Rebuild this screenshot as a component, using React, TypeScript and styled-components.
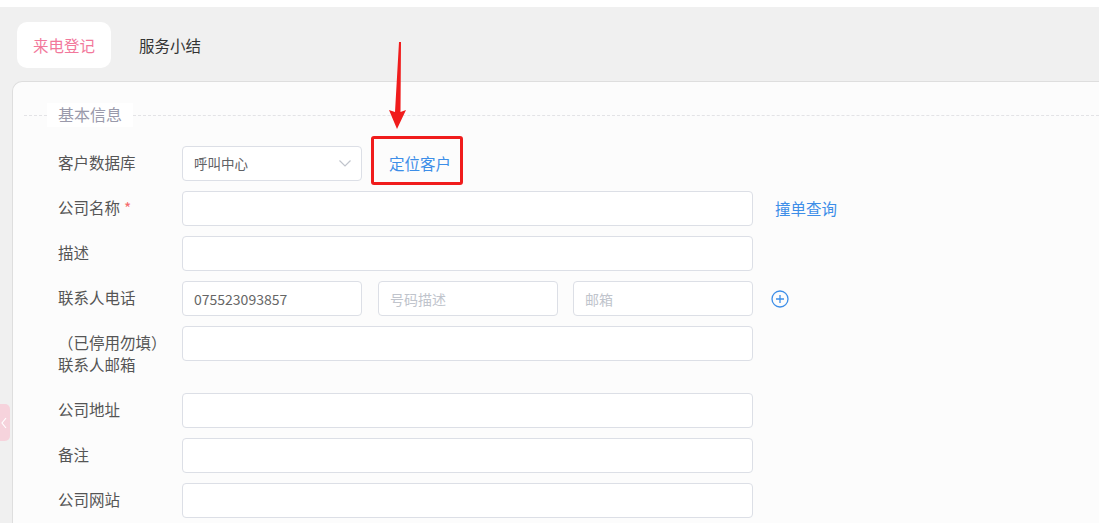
import styled, { createGlobalStyle } from 'styled-components';

const GlobalStyle = createGlobalStyle`
  html, body {
    margin: 0;
    padding: 0;
    background: #ffffff;
    overflow: hidden;
  }
  body {
    font-family: "Noto Sans CJK SC", "Noto Sans", "Liberation Sans", sans-serif;
  }
  * {
    box-sizing: border-box;
  }
`;

const Page = styled.div`
  position: relative;
  width: 1099px;
  height: 523px;
  padding-top: 7px;
  overflow: hidden;
`;

const Main = styled.div`
  background: #f0f0f0;
  height: 516px;
  display: flex;
  flex-direction: column;
`;

const TabBar = styled.div`
  display: flex;
  gap: 12px;
  padding: 15px 0 0 17px;
`;

const Tab = styled.div<{ active?: boolean }>`
  height: 46px;
  padding: 0 16px;
  display: flex;
  align-items: center;
  border-radius: 10px;
  font-size: 15.5px;
  background: ${(p) => (p.active ? '#ffffff' : 'transparent')};
  color: ${(p) => (p.active ? '#f2789b' : '#333333')};
`;

const Panel = styled.div`
  flex: 1;
  margin: 13px 0 0 12px;
  background: #fcfcfc;
  border: 1px solid #dedede;
  border-right: none;
  border-bottom: none;
  border-top-left-radius: 10px;
  padding: 21px 0 0 11px;
`;

const SectionHeader = styled.div`
  display: flex;
  align-items: center;
  height: 24px;
`;

const DashLine = styled.div<{ grow?: boolean }>`
  width: ${(p) => (p.grow ? 'auto' : '23px')};
  flex: ${(p) => (p.grow ? 1 : 'none')};
  border-top: 1px dashed #e3e3e6;
`;

const SectionTitle = styled.div`
  height: 24px;
  padding: 0 11px;
  background: #ffffff;
  color: #9a9aab;
  font-size: 16px;
  line-height: 23px;
`;

const Form = styled.div`
  padding: 19px 0 0 34px;
  display: flex;
  flex-direction: column;
  gap: 10px;
`;

const Row = styled.div`
  display: flex;
  align-items: flex-start;
`;

const Label = styled.div`
  width: 124px;
  flex: none;
  padding: 5px 0 8px;
  font-size: 15.5px;
  line-height: 22px;
  color: #555555;
  white-space: nowrap;
`;

const Required = styled.span`
  color: #f56c6c;
  margin-left: 4px;
`;

const Input = styled.div<{ w: number; placeholder?: boolean }>`
  width: ${(p) => p.w}px;
  height: 35px;
  flex: none;
  border: 1px solid #dcdfe6;
  border-radius: 4px;
  background: #ffffff;
  padding: 0 11px;
  display: flex;
  align-items: center;
  font-size: 14px;
  color: ${(p) => (p.placeholder ? '#c0c4cc' : '#666666')};
`;

const Select = styled(Input)`
  justify-content: space-between;
  padding: 0 8px 2px 11px;
  color: #606266;
  font-size: 13.5px;
`;

const Gap = styled.div<{ w: number }>`
  width: ${(p) => p.w}px;
  flex: none;
`;

const Link = styled.div<{ ml: number; marked?: boolean }>`
  position: relative;
  margin-left: ${(p) => p.ml}px;
  height: 35px;
  line-height: 34px;
  font-size: 15.5px;
  color: #3d8ee8;
  white-space: nowrap;
  ${(p) =>
    p.marked &&
    `
    &::after {
      content: '';
      position: absolute;
      left: -18px;
      right: -12px;
      top: -10px;
      bottom: -4px;
      border: 3px solid #f01c1c;
      border-radius: 3px;
    }
  `}
`;

const IconButton = styled.div`
  margin-left: 18px;
  height: 35px;
  display: flex;
  align-items: center;
`;

const Arrow = styled.svg`
  position: absolute;
  left: 385px;
  top: 40px;
`;

const SideToggle = styled.div`
  position: absolute;
  left: 0;
  top: 404px;
  width: 10px;
  height: 37px;
  background: #f6d3dc;
  border-radius: 0 5px 5px 0;
  display: flex;
  align-items: center;
`;

function Chevron(): JSX.Element {
  return (
    <svg width="16" height="16" viewBox="0 0 16 16">
      <path d="M2.5 5.5 L8 11 L13.5 5.5" fill="none" stroke="#c0c4cc" strokeWidth="1.2" />
    </svg>
  );
}

function PlusCircle(): JSX.Element {
  return (
    <svg width="18" height="18" viewBox="0 0 18 18">
      <circle cx="9" cy="9" r="8" fill="none" stroke="#3d8ee8" strokeWidth="1.3" />
      <path d="M9 5 V13 M5 9 H13" stroke="#3d8ee8" strokeWidth="1.3" />
    </svg>
  );
}

export default function App(): JSX.Element {
  return (
    <Page>
      <GlobalStyle />
      <Main>
        <TabBar>
          <Tab active>来电登记</Tab>
          <Tab>服务小结</Tab>
        </TabBar>
        <Panel>
          <SectionHeader>
            <DashLine />
            <SectionTitle>基本信息</SectionTitle>
            <DashLine grow />
          </SectionHeader>
          <Form>
            <Row>
              <Label>客户数据库</Label>
              <Select w={180}>
                呼叫中心
                <Chevron />
              </Select>
              <Link ml={27} marked>定位客户</Link>
            </Row>
            <Row>
              <Label>
                公司名称<Required>*</Required>
              </Label>
              <Input w={571} />
              <Link ml={22}>撞单查询</Link>
            </Row>
            <Row>
              <Label>描述</Label>
              <Input w={571} />
            </Row>
            <Row>
              <Label>联系人电话</Label>
              <Input w={180}>075523093857</Input>
              <Gap w={16} />
              <Input w={180} placeholder>号码描述</Input>
              <Gap w={15} />
              <Input w={180} placeholder>邮箱</Input>
              <IconButton>
                <PlusCircle />
              </IconButton>
            </Row>
            <Row>
              <Label>
                （已停用勿填）
                <br />
                联系人邮箱
              </Label>
              <Input w={571} />
            </Row>
            <Row>
              <Label>公司地址</Label>
              <Input w={571} />
            </Row>
            <Row>
              <Label>备注</Label>
              <Input w={571} />
            </Row>
            <Row>
              <Label>公司网站</Label>
              <Input w={571} />
            </Row>
          </Form>
        </Panel>
      </Main>
      <Arrow width="24" height="92" viewBox="0 0 24 92">
        <polygon points="14,2 16,2 15.5,72 21,70 12,89 4,70 10,72" fill="#f01c1c" />
      </Arrow>
      <SideToggle>
        <svg width="10" height="16" viewBox="0 0 10 16">
          <path d="M6 3 L2 8 L6 13" fill="none" stroke="#ffffff" strokeWidth="1.2" />
        </svg>
      </SideToggle>
    </Page>
  );
}
